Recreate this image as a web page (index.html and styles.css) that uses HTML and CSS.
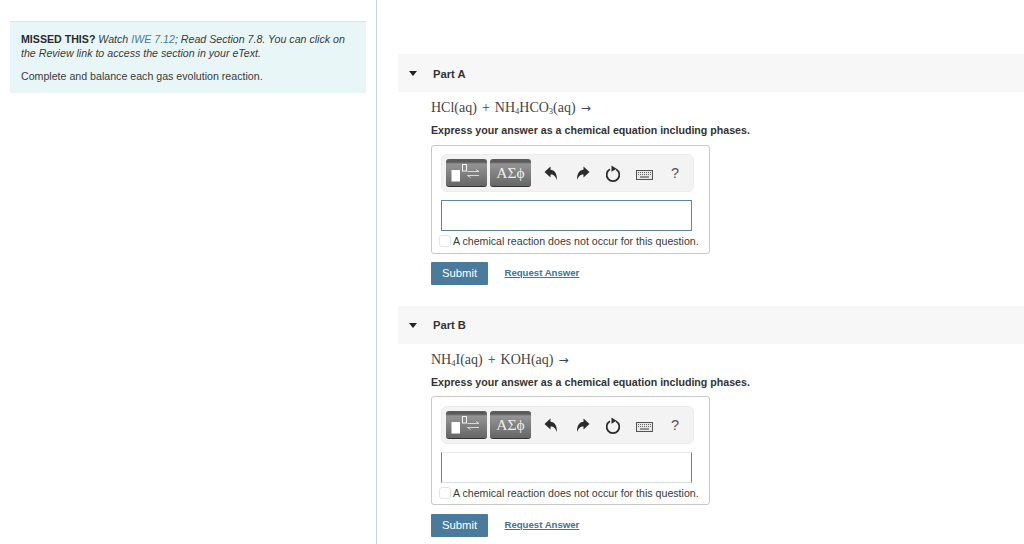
FILE: index.html
```html
<!DOCTYPE html>
<html lang="en">
<head>
<meta charset="utf-8">
<title>Gas evolution reactions</title>
<link rel="stylesheet" href="styles.css">
</head>
<body>
<svg class="defs" width="0" height="0" aria-hidden="true">
  <symbol id="i-tmpl" viewBox="0 0 41 28">
    <rect x="5.500" y="11" width="8.500" height="11.500" fill="#fff"/>
    <rect x="16.500" y="5.500" width="4" height="6.500" fill="none" stroke="#f2f2f2" stroke-width="1"/>
    <path d="M21.500 12.500H33L30 10.500M33 16.500H21.500L24.500 18.500" fill="none" stroke="#d8d8d8" stroke-width="1"/>
  </symbol>
  <symbol id="i-undo" viewBox="0 0 14 15">
    <path d="M0.500 6 6.500 0.500V3.700C10.500 4 13 7 13 14 11.500 10.500 10 8.500 6.500 8.500V11.500Z" fill="#2b2b2b"/>
  </symbol>
  <symbol id="i-redo" viewBox="0 0 14 15">
    <path d="M13.500 6 7.500 0.500V3.700C3.500 4 1 7 1 14 2.500 10.500 4 8.500 7.500 8.500V11.500Z" fill="#2b2b2b"/>
  </symbol>
  <symbol id="i-reset" viewBox="0 0 16 17">
    <path d="M5 4.300A6.300 6.300 0 1 0 11 4.300" fill="none" stroke="#2b2b2b" stroke-width="1.700"/>
    <path d="M6.500 0.500 11.500 3.800 6.500 6.800Z" fill="#2b2b2b"/>
  </symbol>
  <symbol id="i-keys" viewBox="0 0 17 10">
    <rect x="0.500" y="0.500" width="16" height="9" fill="#e8e8e8" stroke="#555"/>
    <path d="M2 2.500h13M2 4.500h13" stroke="#666" stroke-width="1" stroke-dasharray="1 1"/>
    <path d="M4 7h9" stroke="#777" stroke-width="1.500"/>
  </symbol>
</svg>
<div class="page">
  <aside class="side">
    <div class="intro">
      <p class="intro-p"><strong>MISSED THIS?</strong> <em>Watch <a class="intro-link">IWE 7.12</a>; Read Section 7.8. You can click on the Review link to access the section in your eText.</em></p>
      <p class="intro-p intro-last">Complete and balance each gas evolution reaction.</p>
    </div>
  </aside>
  <main class="main">
    <section class="part part-a">
      <header class="part-head"><span class="caret"></span><span class="part-title">Part A</span></header>
      <div class="part-body">
        <p class="eq">HCl(aq)<span class="plus">+</span>NH<sub>4</sub>HCO<sub>3</sub>(aq)<span class="arrow">→</span></p>
        <p class="ask">Express your answer as a chemical equation including phases.</p>
        <div class="answer">
          <div class="toolbar">
            <span class="tbtn tbtn-a"><svg width="41" height="28"><use href="#i-tmpl"/></svg></span>
            <span class="tbtn tbtn-b">ΑΣϕ</span>
            <svg class="ic ic-undo" width="14" height="15"><use href="#i-undo"/></svg>
            <svg class="ic ic-redo" width="14" height="15"><use href="#i-redo"/></svg>
            <svg class="ic ic-reset" width="16" height="17"><use href="#i-reset"/></svg>
            <svg class="ic ic-keys" width="17" height="10"><use href="#i-keys"/></svg>
            <span class="help">?</span>
          </div>
          <div class="input"></div>
          <label class="noreact"><span class="check"></span>A chemical reaction does not occur for this question.</label>
        </div>
        <div class="actions"><span class="submit">Submit</span><a class="request">Request Answer</a></div>
      </div>
    </section>
    <section class="part part-b">
      <header class="part-head"><span class="caret"></span><span class="part-title">Part B</span></header>
      <div class="part-body">
        <p class="eq">NH<sub>4</sub>I(aq)<span class="plus">+</span>KOH(aq)<span class="arrow">→</span></p>
        <p class="ask">Express your answer as a chemical equation including phases.</p>
        <div class="answer">
          <div class="toolbar">
            <span class="tbtn tbtn-a"><svg width="41" height="28"><use href="#i-tmpl"/></svg></span>
            <span class="tbtn tbtn-b">ΑΣϕ</span>
            <svg class="ic ic-undo" width="14" height="15"><use href="#i-undo"/></svg>
            <svg class="ic ic-redo" width="14" height="15"><use href="#i-redo"/></svg>
            <svg class="ic ic-reset" width="16" height="17"><use href="#i-reset"/></svg>
            <svg class="ic ic-keys" width="17" height="10"><use href="#i-keys"/></svg>
            <span class="help">?</span>
          </div>
          <div class="input"></div>
          <label class="noreact"><span class="check"></span>A chemical reaction does not occur for this question.</label>
        </div>
        <div class="actions"><span class="submit">Submit</span><a class="request">Request Answer</a></div>
      </div>
    </section>
  </main>
</div>
</body>
</html>
```

FILE: styles.css
```css
* { box-sizing: border-box; }
html, body { margin: 0; height: 100%; overflow: hidden; background: #fff; }
body { font-family: "Liberation Sans", Arial, sans-serif; color: #3a3a3a; font-size: 11px; }
.defs { position: absolute; }
.page { display: flex; height: 544px; }
.side { width: 377px; flex: none; border-right: 1px solid #c5d3de; padding: 21px 10px 0 10px; }
.intro { background: #e9f6f7; border-top: 1px solid #dde3e6; padding: 10px 11px 10px; height: 72px; }
.intro-p { margin: 0; font-size: 10.63px; line-height: 14px; color: #3a3a3a; }
.intro-last { margin-top: 9px; }
.intro-p strong { color: #2b2b2b; }
.intro-link { color: #4a7b9d; }
.main { flex: 1; padding: 54px 0 0 21px; }
.part { height: 252px; }
.part-head { height: 38px; background: #f7f7f7; display: flex; align-items: center; padding: 1px 0 0 11px; }
.part-b .part-head { padding-top: 0; }
.caret { width: 0; height: 0; border-left: 4.5px solid transparent; border-right: 4.500px solid transparent; border-top: 5px solid #222; }
.part-title { margin-left: 16px; font-size: 11.2px; font-weight: bold; color: #333; }
.part-body { padding: 6px 0 0 33px; }
.eq { margin: 0; font-family: "Liberation Serif", serif; font-size: 14px; line-height: 20px; color: #444; }
.eq sub { font-size: 8.500px; line-height: 0; vertical-align: -2px; }
.plus { margin: 0 5px; }
.arrow { margin-left: 5px; font-family: "DejaVu Sans", sans-serif; font-size: 12px; }
.ask { margin: 5px 0 0; font-size: 10.63px; line-height: 14px; font-weight: bold; color: #333; }
.answer { width: 279px; height: 109px; margin-top: 8px; border: 1px solid #c8c8c8; border-radius: 3px; padding: 8px 0 0 9px; background: #fff; }
.part-b .answer { margin-top: 7px; padding-top: 9px; }
.toolbar { width: 253px; height: 38px; background: #f3f3f3; border: 1px solid #ececec; border-radius: 6px; display: flex; align-items: center; padding-left: 4px; }
.tbtn { height: 28px; border-radius: 3px; background: linear-gradient(#5a5a5a 0, #5a5a5a 3px, #949494 5px, #666 100%); border-bottom: 1px solid #333; display: block; }
.tbtn-a { width: 41px; margin-right: 3px; }
.tbtn-a svg { display: block; }
.tbtn-b { width: 41px; color: #eee; font-family: "Liberation Serif", serif; font-size: 15.500px; line-height: 27px; text-align: center; }
.ic { flex: none; }
.ic-undo { margin-left: 13px; }
.ic-redo { margin-left: 18px; }
.ic-reset { margin-left: 15px; }
.ic-keys { margin-left: 15px; margin-top: 3px; }
.help { margin-left: 18px; font-size: 14.500px; color: #555; }
.input { width: 251px; height: 31px; margin-top: 8px; border: 1px solid #5c86a3; background: #fff; }
.part-b .input { border-top-color: #e8e8e8; border-bottom-color: #d8dfe4; }
.noreact { display: flex; align-items: center; margin-top: 3px; height: 14px; font-size: 10.63px; color: #3a3a3a; white-space: nowrap; }
.check { width: 12px; height: 12px; border: 1px solid #e4e4e4; border-radius: 3px; margin-left: -2px; margin-right: 2px; flex: none; }
.actions { display: flex; align-items: center; margin-top: 8px; }
.part-b .actions { margin-top: 9px; }
.submit { width: 57px; height: 23px; background: #4a7b9d; color: #fff; font-size: 11.300px; line-height: 23px; text-align: center; border-radius: 1px; }
.request { margin: 0 0 2px 16.500px; color: #3e7497; font-size: 9.600px; font-weight: bold; text-decoration: underline; }
```
